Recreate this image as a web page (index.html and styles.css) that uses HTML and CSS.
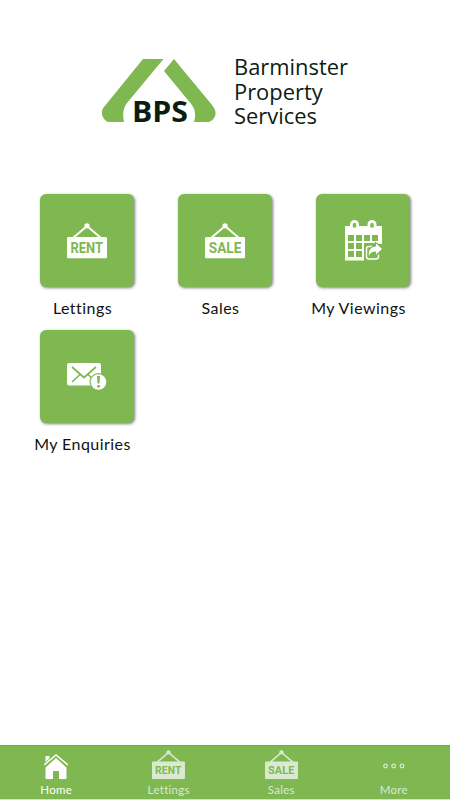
FILE: index.html
```
<!DOCTYPE html>
<html lang="en">
<head>
  <meta charset="UTF-8">
  <meta name="viewport" content="width=device-width, initial-scale=1">
  <title>Barminster Property Services</title>
  <link rel="stylesheet" href="styles.css">
</head>
<body>
  <svg class="symbols">
    <symbol id="sign" viewBox="0 0 40 36">
      <path d="M6 15 L20 3 L34 15" fill="none" stroke="currentColor" stroke-width="2"/>
      <circle cx="20" cy="2.8" r="2.6" fill="currentColor"/>
      <rect x="0" y="14" width="40" height="21.3" rx="1" fill="currentColor"/>
    </symbol>
  </svg>

  <div class="app">
    <header class="logo">
      <svg class="logo-mark" viewBox="0 0 116 76" width="116" height="76">
        <path d="M42 1 H62.5 L26 45 Q20.5 52 23 64 H7 C1 61 -1 54 3 49 Z"/>
        <path d="M63 13 L73 1 L111 47 C117 54 115 61 108 64 H93 Q96 54 91 47 Z"/>
        <text x="31" y="64" textLength="56" lengthAdjust="spacingAndGlyphs">BPS</text>
      </svg>
      <div class="logo-name">Barminster<br>Property<br>Services</div>
    </header>

    <main class="grid">
      <a class="item">
        <div class="tile">
          <svg width="40" height="36" viewBox="0 0 40 36">
            <use href="#sign"/>
            <text class="sign-text" x="3.5" y="29.6" textLength="32.5" lengthAdjust="spacingAndGlyphs">RENT</text>
          </svg>
        </div>
        <span class="label">Lettings</span>
      </a>
      <a class="item">
        <div class="tile">
          <svg width="40" height="36" viewBox="0 0 40 36">
            <use href="#sign"/>
            <text class="sign-text" x="3.8" y="29.6" textLength="32.5" lengthAdjust="spacingAndGlyphs">SALE</text>
          </svg>
        </div>
        <span class="label">Sales</span>
      </a>
      <a class="item">
        <div class="tile">
          <svg width="40" height="43" viewBox="-2 -2 40 43">
            <path fill="#fff" d="M0 5 H37 V23 H19 V39.5 H0 Z"/>
            <path fill="#fff" d="M5 7 V3.5 a4.5 4.5 0 0 1 9 0 V7z M22.5 7 V3.5 a4.5 4.5 0 0 1 9 0 V7z"/>
            <path class="cut" d="M7.8 6.500 V3.5 a1.7 1.7 0 0 1 3.4 0 V6.500z M25.300 6.500 V3.5 a1.7 1.7 0 0 1 3.4 0 V6.500z"/>
            <path class="cut" d="M3 14h6v6h-6z M11 14h6v6h-6z M19 14h6v6h-6z M27 14h6v6h-6z M3 22h6v6h-6z M11 22h6v6h-6z M3 30h6v6h-6z M11 30h6v6h-6z"/>
            <path class="cut" d="M19 22 h14 v17 h-14z"/>
            <path d="M27 25.5 H24 Q21.5 25.5 21.5 28 V35.5 Q21.5 38 24 38 H31 Q33.5 38 33.5 35.5 V33.5" fill="none" stroke="#fff" stroke-width="1.4"/>
            <path d="M24 35 C23 29 26 26 31 25.5 V22.5 L37 28 L31 33.5 V30.5 C27 30.3 25 32 24 35Z" fill="#fff" stroke="#7fb851" stroke-width="2" paint-order="stroke"/>
          </svg>
        </div>
        <span class="label">My Viewings</span>
      </a>
      <a class="item">
        <div class="tile">
          <svg width="40" height="28" viewBox="0 0 40 28">
            <rect width="34" height="22.5" rx="2" fill="#fff"/>
            <path d="M5 4 L17 14.5 L29 4 M5 19 L13 11.5 M21 11.5 L29 19" fill="none" stroke="#7fb851" stroke-width="1.7"/>
            <circle cx="31.5" cy="19" r="9" class="cut"/>
            <circle cx="31.5" cy="19" r="7.8" fill="#fff"/>
            <path class="cut" d="M30 13 h3 l-.5 7.5 h-2z M30.2 22 h2.6 v2.5 h-2.6z"/>
          </svg>
        </div>
        <span class="label">My Enquiries</span>
      </a>
    </main>

    <nav class="tabs">
      <a class="tab active">
        <svg width="24" height="26" viewBox="0 0 24 26">
          <path fill="currentColor" d="M1.5 2 h4 v4 l-4 4z M12 4 L22.5 13.5 V25 H15 V17 H9 V25 H1.5 V13.5z"/>
          <path d="M0 11.5 L12 1 L24 11.5" fill="none" stroke="#7fb851" stroke-width="3.5"/>
          <path d="M0 11 L12 1 L24 11" fill="none" stroke="currentColor" stroke-width="1.5"/>
        </svg>
        <span>Home</span>
      </a>
      <a class="tab">
        <svg width="33" height="29.7" viewBox="0 0 40 36">
          <use href="#sign"/>
          <text class="sign-text" x="3.5" y="29.6" textLength="32.5" lengthAdjust="spacingAndGlyphs">RENT</text>
        </svg>
        <span>Lettings</span>
      </a>
      <a class="tab">
        <svg width="33" height="29.7" viewBox="0 0 40 36">
          <use href="#sign"/>
          <text class="sign-text" x="3.5" y="29.6" textLength="32.5" lengthAdjust="spacingAndGlyphs">SALE</text>
        </svg>
        <span>Sales</span>
      </a>
      <a class="tab">
        <svg class="dots" width="22" height="6" viewBox="0 0 22 6">
          <g fill="none" stroke="currentColor" stroke-width="1.2">
            <circle cx="2.5" cy="3" r="1.8"/>
            <circle cx="10.7" cy="3" r="1.8"/>
            <circle cx="19" cy="3" r="1.8"/>
          </g>
        </svg>
        <span>More</span>
      </a>
    </nav>
  </div>
</body>
</html>
```
FILE: styles.css
```
body {
  margin: 0;
  background-color: #fff;
  font-family: Lato, sans-serif;
}

svg {
  display: block;
}

.symbols {
  display: none;
}

.app {
  display: flex;
  flex-direction: column;
  height: 800px;
}

.logo {
  display: flex;
  gap: 17px;
  height: 136px;
  padding: 58px 0 0 101px;
}

.logo-mark {
  fill: #7fb851;
}

.logo-mark text {
  font: bold 29px "Open Sans", sans-serif;
  fill: #0d1c12;
}

.logo-name {
  margin-top: -3px;
  font-family: "Open Sans", sans-serif;
  font-size: 21.9px;
  line-height: 24.6px;
  color: #0d1c12;
}

.grid {
  display: grid;
  grid-template-columns: repeat(3, 138px);
  grid-auto-rows: 136px;
  padding-left: 13.5px;
  flex: 1;
  align-content: start;
}

.item {
  display: flex;
  flex-direction: column;
  align-items: center;
}

.tile {
  display: flex;
  justify-content: center;
  align-items: center;
  width: 94px;
  height: 93px;
  margin-left: 9px;
  border-radius: 6px;
  background-color: #7fb851;
  box-shadow: 1px 1px 3px rgba(0, 0, 0, 0.5);
  color: #fff;
}

.cut {
  fill: #7fb851;
}

.sign-text {
  font: bold 14px Roboto, sans-serif;
  fill: #7fb851;
}

.label {
  margin-top: 11px;
  font-size: 16px;
  line-height: 20px;
  letter-spacing: 0.45px;
  color: #111;
  white-space: nowrap;
}

.tabs {
  display: flex;
  height: 55px;
  box-sizing: border-box;
  border-top: 1px solid #74aa49;
  border-bottom: 1px solid #cfe5bd;
  background-color: #7fb851;
}

.tab {
  display: flex;
  flex-direction: column;
  align-items: center;
  justify-content: flex-end;
  width: 112.5px;
  color: #d9ead0;
  font-size: 11.5px;
  line-height: 14px;
  letter-spacing: 0.3px;
}

.tab span {
  margin: 3px 0 2px;
}

.tab.active {
  color: #fff;
}

.dots {
  margin-bottom: 11px;
}
```
